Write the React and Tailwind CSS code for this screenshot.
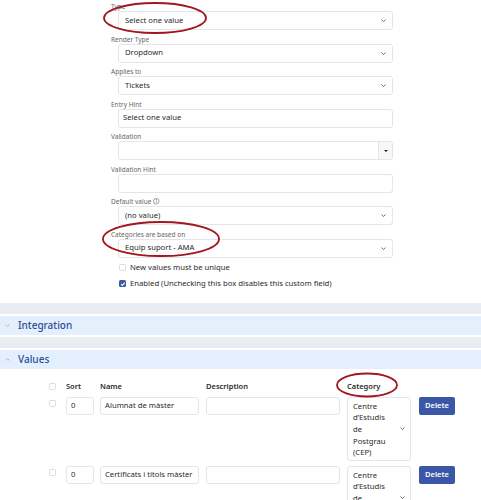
import React from 'react'

/**
 * Custom field editor - form fields, collapsible sections and a values table
 */

function Chevron({ className = '', up = false }) {
  return (
    <svg viewBox="0 0 10 6" className={className} fill="none" stroke="currentColor" strokeWidth="1.5">
      <path d={up ? 'M1 5l4-4 4 4' : 'M1 1l4 4 4-4'} />
    </svg>
  )
}

function Field({ label, children }) {
  return (
    <div className="pb-[4.5px]">
      <div className="flex h-[9px] items-center gap-[2px] text-[6.5px] leading-[9px] text-[#666]">{label}</div>
      <div className="ml-[7px] w-[275px]">{children}</div>
    </div>
  )
}

function Select({ value }) {
  return (
    <div className="flex h-[19px] items-center justify-between rounded-[3px] border border-[#e3e5e9] bg-white pl-[6px] pr-[6px] text-[7.7px] text-[#2a2a2a]">
      <span>{value}</span>
      <Chevron className="h-[3px] w-[5px] text-[#444]" />
    </div>
  )
}

function TextInput({ value = '' }) {
  return (
    <div className="flex h-[19px] items-center rounded-[3px] border border-[#e3e5e9] bg-white pl-[4px] text-[7.7px] text-[#2a2a2a]">
      {value}
    </div>
  )
}

function Checkbox({ checked = false, className = '' }) {
  return checked ? (
    <span className={`flex h-[7px] w-[7px] items-center justify-center rounded-[1.5px] bg-[#3b5ba5] ${className}`}>
      <svg viewBox="0 0 8 8" className="h-[6px] w-[6px]" fill="none" stroke="white" strokeWidth="1.4">
        <path d="M1.5 4.2l1.7 1.7 3.3-3.6" />
      </svg>
    </span>
  ) : (
    <span className={`block h-[7px] w-[7px] rounded-[1.5px] border border-[#d8dbe0] bg-white ${className}`} />
  )
}

function SectionHeader({ title, open }) {
  return (
    <>
      <div className="mt-[2px] h-[11px] bg-[#e9ecf0]" />
      <div className="mt-[2px] flex h-[19px] items-center bg-[#e3effc] pl-[5px]">
        <Chevron up={open} className="h-[3px] w-[5px] text-[#9aa3ae]" />
        <span className="ml-[8px] text-[10px] font-medium text-[#2e4d9b]">{title}</span>
      </div>
    </>
  )
}

const rows = [
  { sort: '0', name: 'Alumnat de màster' },
  { sort: '0', name: 'Certificats i títols màster' },
]

export default function App() {
  return (
    <div className="relative h-[500px] w-[481px] overflow-hidden bg-white font-['Noto_Sans',sans-serif]">
      {/* Field form */}
      <div className="pl-[111px] pt-[2px]">
        <Field label="Type">
          <Select value="Select one value" />
        </Field>
        <Field label="Render Type">
          <Select value="Dropdown" />
        </Field>
        <Field label="Applies to">
          <Select value="Tickets" />
        </Field>
        <Field label="Entry Hint">
          <TextInput value="Select one value" />
        </Field>
        <Field label="Validation">
          <div className="flex h-[19px] rounded-[3px] border border-[#e3e5e9] bg-white">
            <div className="flex-1" />
            <div className="flex w-[14px] items-center justify-center border-l border-[#e3e5e9] bg-[#f6f7f8]">
              <span className="block h-0 w-0 border-x-[2px] border-t-[2.5px] border-x-transparent border-t-[#222]" />
            </div>
          </div>
        </Field>
        <Field label="Validation Hint">
          <TextInput />
        </Field>
        <Field
          label={
            <>
              <span>Default value</span>
              <svg viewBox="0 0 10 10" className="h-[6.5px] w-[6.5px]" fill="none" stroke="#666" strokeWidth="0.9">
                <circle cx="5" cy="5" r="4.3" />
                <path d="M5 4.3v3" />
                <circle cx="5" cy="2.8" r="0.4" fill="#666" />
              </svg>
            </>
          }
        >
          <Select value="(no value)" />
        </Field>
        <Field label="Categories are based on">
          <Select value="Equip suport - AMA" />
        </Field>

        <div className="ml-[8px] mt-[-2.5px] flex h-[16px] items-center gap-[4px] text-[7.7px] text-[#2a2a2a]">
          <Checkbox />
          <span>New values must be unique</span>
        </div>
        <div className="ml-[8px] flex h-[16px] items-center gap-[4px] text-[7.7px] text-[#2a2a2a]">
          <Checkbox checked />
          <span>Enabled (Unchecking this box disables this custom field)</span>
        </div>
      </div>

      {/* Collapsible sections */}
      <div className="mt-[11px]">
        <SectionHeader title="Integration" />
        <SectionHeader title="Values" open />
      </div>

      {/* Values table */}
      <div className="pl-[49px] pt-[12px]">
        <div className="flex h-[12px] items-center text-[7.5px] font-semibold text-[#2a2a2a]">
          <Checkbox className="mr-[10px]" />
          <span className="w-[34px]">Sort</span>
          <span className="w-[106px]">Name</span>
          <span className="w-[141px]">Description</span>
          <span>Category</span>
        </div>
        <div className="mt-[4px] flex flex-col gap-[5px]">
          {rows.map((r) => (
            <div key={r.name} className="flex items-start text-[7.7px] text-[#2a2a2a]">
              <Checkbox className="mr-[10px] mt-[3px]" />
              <div className="flex h-[18px] w-[28px] items-center rounded-[3px] border border-[#e3e5e9] pl-[4px]">{r.sort}</div>
              <div className="ml-[6px] flex h-[18px] w-[99px] items-center rounded-[3px] border border-[#e3e5e9] pl-[4px]">{r.name}</div>
              <div className="ml-[7px] h-[18px] w-[134px] rounded-[3px] border border-[#e3e5e9]" />
              <div className="ml-[7px] flex h-[64px] w-[64px] items-center rounded-[3px] border border-[#e3e5e9] pl-[5px] pr-[5px]">
                <span className="w-[40px] self-start pt-[3px] leading-[11.7px]">Centre d’Estudis de Postgrau (CEP)</span>
                <Chevron className="ml-auto h-[3px] w-[5px] text-[#444]" />
              </div>
              <button className="ml-[8px] flex h-[18px] w-[36px] items-center justify-center rounded-[2px] bg-[#3a57a7] text-[7.5px] font-semibold text-white">
                Delete
              </button>
            </div>
          ))}
        </div>
      </div>

      {/* Red annotation ellipses */}
      <svg className="pointer-events-none absolute left-0 top-0" width="481" height="500" fill="none" stroke="#a3151f" strokeWidth="1.8">
        <ellipse cx="155" cy="18" rx="51" ry="15" />
        <ellipse cx="161" cy="239" rx="58" ry="17" />
        <ellipse cx="367" cy="385" rx="30" ry="11.5" />
      </svg>
    </div>
  )
}
